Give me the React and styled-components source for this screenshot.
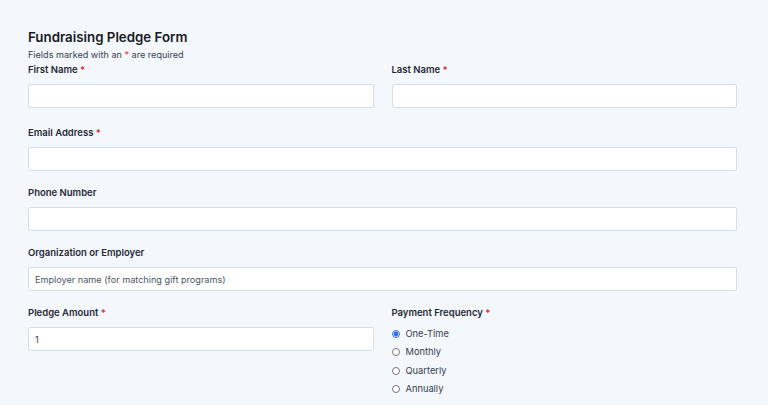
import React from 'react'
import styled, { createGlobalStyle } from 'styled-components'

const GlobalStyle = createGlobalStyle`
  body {
    margin: 0;
    background: #f4f7fb;
    font-family: Inter, "Noto Sans", sans-serif;
    color: #1f2937;
  }
`

const frequencies = ['One-Time', 'Monthly', 'Quarterly', 'Annually']

const App = () => {
  return (
    <>
      <GlobalStyle />
      <StyledForm>
        <h1>Fundraising Pledge Form</h1>
        <p className="note">
          Fields marked with an <Req>*</Req> are required
        </p>

        <Row $space={19}>
          <Field>
            <Label>First Name <Req>*</Req></Label>
            <Input type="text" />
          </Field>
          <Field>
            <Label>Last Name <Req>*</Req></Label>
            <Input type="text" />
          </Field>
        </Row>

        <Field>
          <Label>Email Address <Req>*</Req></Label>
          <Input type="email" />
        </Field>

        <Field>
          <Label>Phone Number</Label>
          <Input type="tel" />
        </Field>

        <Field>
          <Label>Organization or Employer</Label>
          <Input type="text" placeholder="Employer name (for matching gift programs)" />
        </Field>

        <Row>
          <Field>
            <Label>Pledge Amount <Req>*</Req></Label>
            <Input type="number" defaultValue="1" />
          </Field>
          <Field>
            <Label>Payment Frequency <Req>*</Req></Label>
            <RadioList>
              {frequencies.map((f, i) => (
                <RadioOption key={f}>
                  <input type="radio" name="freq" defaultChecked={i === 0} />
                  {f}
                </RadioOption>
              ))}
            </RadioList>
          </Field>
        </Row>
      </StyledForm>
    </>
  )
}

const StyledForm = styled.form`
  padding: 28px 31px 0 28px;

  h1 {
    margin: 0;
    font-size: 13.3px;
    line-height: 18px;
    font-weight: 600;
    color: #161b26;
  }

  .note {
    margin: 3px 0 3px;
    font-size: 9.1px;
    line-height: 12px;
    color: #374151;
  }
`

const Row = styled.div`
  display: grid;
  grid-template-columns: 1fr 1fr;
  column-gap: 18px;
  margin-bottom: ${p => (p.$space ? p.$space - 16 : 0)}px;
`

const Field = styled.div`
  display: flex;
  flex-direction: column;
  margin-bottom: 16px;
`

const Label = styled.label`
  font-size: 9.5px;
  line-height: 12px;
  font-weight: 600;
  color: #1f2937;
  margin-bottom: 8px;
`

const Req = styled.span`
  color: #e11d2e;
`

const Input = styled.input`
  box-sizing: border-box;
  height: 24px;
  width: 100%;
  margin: 0;
  padding: 0 6px;
  border: 1px solid #d8dee8;
  border-radius: 2px;
  background: #fff;
  font-family: Inter, "Noto Sans", sans-serif;
  font-size: 9.15px;
  color: #374151;
  outline: none;
  -moz-appearance: textfield;

  &::placeholder {
    color: #4b5563;
  }

  &::-webkit-inner-spin-button,
  &::-webkit-outer-spin-button {
    -webkit-appearance: none;
    margin: 0;
  }
`

const RadioList = styled.div`
  display: flex;
  flex-direction: column;
  gap: 6.4px;
  margin-top: 1px;
`

const RadioOption = styled.label`
  display: flex;
  align-items: center;
  gap: 6px;
  font-size: 9.3px;
  line-height: 12px;
  color: #374151;

  input {
    margin: 0;
    width: 8px;
    height: 8px;
    accent-color: #2f6fec;
  }
`

export default App
